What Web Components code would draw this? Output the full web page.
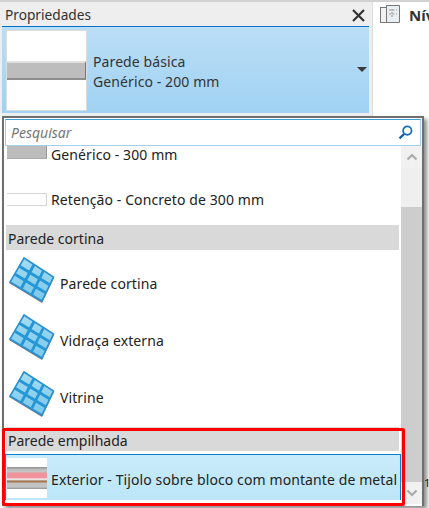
<!DOCTYPE html>
<html><head><meta charset="utf-8">
<style>
html,body{margin:0;padding:0;background:#fff;overflow:hidden}
body{width:429px;height:508px;font-family:"Noto Sans","Open Sans",sans-serif;color:#222}
</style></head><body>
<app-shell></app-shell>
<template id="curtain"><svg width="46" height="46" viewBox="0 0 46 46">
<defs><linearGradient id="cg" x1="0" y1="0" x2="0" y2="1"><stop offset="0" stop-color="#a6dcf2"/><stop offset="1" stop-color="#78c8ec"/></linearGradient></defs>
<polygon points="15,2 45,21 33,46 0,26" fill="#56656e" opacity=".85"/>
<polygon points="15,1 44.5,20 33,44 1,25" fill="url(#cg)" stroke="#2a90d0" stroke-width="1.6"/>
<g stroke="#2596d6" stroke-width="2.8" fill="none"><path d="M25 7.5L12 32M34.5 13.5L22.5 38M10 9L41 28M5.500 17L37 36"/></g>
</svg></template>
<script>
const def=(n,css,html,init)=>customElements.define(n,class extends HTMLElement{
  constructor(){super();this.attachShadow({mode:'open'}).innerHTML='<style>'+css+'</style>'+html;}
  connectedCallback(){init&&init(this)}
});
def('wall-thumb',`:host{display:block;background:#fff;box-sizing:border-box;flex:none;position:relative}
 .w{display:flex;flex-direction:column;justify-content:center;height:100%}
 ::slotted(*){display:block}`,`<div class="w"><slot></slot></div>`);
def('sec-head',`:host{display:flex;align-items:center;background:#d9d9d9;margin-left:1px;padding:2px 0 0 2px;font-size:14px;height:25px;color:#222;width:393px;box-sizing:border-box}`,`<slot></slot>`);
def('type-row',`:host{display:flex;align-items:center;font-size:14px;letter-spacing:.1px;color:#222;white-space:nowrap}
 .tx{padding-top:var(--tx-top,0px)}`,`<slot name="pic"></slot><span class="tx"><slot></slot></span>`);
def('panel-header',`:host{display:flex;align-items:center;justify-content:space-between;height:24px;box-sizing:border-box;padding:0 7px 0 5px;font-size:13.7px;color:#333}
 svg{display:block;margin-top:2px}`,`<slot></slot><svg width="13" height="13" viewBox="0 0 13 13"><path d="M1 1L12 12M12 1L1 12" stroke="#333" stroke-width="2.2"/></svg>`);
def('type-selector',`:host{display:flex;align-items:center;height:87px;margin:0 3px 0 2px;box-sizing:border-box;border-top:1.5px solid #0072c6;background:linear-gradient(#bbdef6,#a0d2f3);padding:3px 2px 3px 4px;font-size:14px;letter-spacing:.1px;line-height:20px;color:#333}
 .t{flex:1;padding-left:6px;padding-top:3px}
 .thumb{width:81px;height:81px;background:#fff;border:1px solid #dcdcdc;box-sizing:border-box;display:flex;align-items:center;flex:none}
 .bar{width:100%;height:19px;background:#bdbdbd;border-top:2px solid #e0e0e0;border-bottom:2px solid #8e8e8e;border-right:1px solid #777;box-sizing:border-box}
 .c{width:0;height:0;border-left:5px solid transparent;border-right:5px solid transparent;border-top:5px solid #3a3a3a;margin-top:-1px}`,
 `<div class="thumb"><div class="bar"></div></div><div class="t"><slot></slot></div><div class="c"></div>`);
def('props-panel',`:host{display:block;width:372px;height:114px;background:#eeeeee;flex:none}`,`<slot></slot>`);
def('side-view',`:host{display:flex;align-items:flex-start;gap:9px;flex:1;padding:3px 0 0 7px;font-weight:700;font-size:15px;color:#333;border-left:1px solid #dcdcdc;overflow:hidden;white-space:nowrap;height:111px}
 svg{flex:none;margin-top:0}`,`<svg width="20" height="18" viewBox="0 0 20 18" fill="none"><rect x=".5" y="2.5" width="13" height="15" fill="#f2f2f2" stroke="#777"/><path d="M6.5 .5H19.5V17.5H6.5V.5Z" fill="#e9eef2" stroke="#777"/><path d="M9 5h8M9 9h8" stroke="#999" stroke-dasharray="2 1.5"/><path d="M12 4v8" stroke="#888" stroke-dasharray="2 1"/></svg><slot></slot>`);
def('search-box',`:host{display:flex;align-items:center;justify-content:space-between;height:27px;margin:1px 1px 0 1px;box-sizing:border-box;border:1px solid #a5cfe8;border-top-color:#3e9dd4;background:#fff;padding:0 7px 0 5px;font-style:italic;font-size:14px;color:#777}
 svg{flex:none}`,`<slot></slot><svg width="15" height="15" viewBox="0 0 15 15" fill="none"><circle cx="9.3" cy="5.6" r="4.2" stroke="#1a70b8" stroke-width="1.8"/><path d="M6 9L1.5 13.5" stroke="#155f9f" stroke-width="2.4"/></svg>`);
def('scroll-bar',`:host{display:flex;flex-direction:column;width:21px;height:358px;background:#efefef;flex:none}
 .b{height:22px;display:flex;align-items:center;justify-content:center;flex:none;background:#f1f1f1}
 .s{height:39px;flex:none}.th{flex:1;background:#cdcdcd}`,
 `<div class="b"><svg width="12" height="8" viewBox="0 0 12 8" fill="none"><path d="M1.5 6.5L6 2L10.5 6.5" stroke="#a8a8a8" stroke-width="2"/></svg></div><div class="s"></div><div class="th"></div><div class="b"><svg width="12" height="8" viewBox="0 0 12 8" fill="none"><path d="M1.5 1.5L6 6L10.5 1.5" stroke="#a8a8a8" stroke-width="2"/></svg></div>`);
def('type-menu',`:host{position:absolute;left:2px;top:116px;width:422px;height:390px;box-sizing:border-box;background:#fff;border-style:solid;border-width:2px 2px 0 2px;border-color:#6f6f6f;box-shadow:3px 3px 4px rgba(0,0,0,.45);display:flex;flex-direction:column}
 .main{display:flex;flex:1;height:358px}
 .list{flex:1;min-width:0;padding-left:1px}`,
 `<slot name="search"></slot><div class="main"><div class="list"><slot></slot></div><slot name="bar"></slot></div>`);
def('red-frame',`:host{position:absolute;left:2px;top:428px;width:403px;height:78px;box-sizing:border-box;border:3.5px solid #f00;border-radius:2px;pointer-events:none}`,``);
def('app-shell',`:host{display:block;position:relative;width:429px;height:508px;overflow:hidden;background:#fff}
 .top{height:2px;background:#d2d2d2}
 .row{display:flex}
 .one{position:absolute;left:424px;top:476px;font-size:11px;color:#222;line-height:14px}
 wall-thumb{width:40px}
 .g1{height:13px;background:#bdbdbd;border-right:1px solid #999;border-bottom:1px solid #aaa;box-sizing:border-box}
 .g2{height:13px;background:#fff;border:1px solid #d4d4d4;border-left:none;box-sizing:border-box}
 type-row span{display:block}
 .pic-a{margin-right:4px}
 .r1{height:13px;margin-top:0;--tx-top:3px}.r2{height:14px;margin-top:33px}
 .rr{margin-left:2px}
 .h1{margin-top:19px}
 .cw{height:57px;margin-top:0;--tx-top:4px}.cw svg{margin:0 5px 0 4px}
 .h2{margin-top:3px;height:24px}
 .sel{margin-top:3px;width:396px;height:46px;box-sizing:border-box;background:linear-gradient(#c8ebfa,#bce6f8);border:1px solid #1080cc;border-bottom:none;padding-left:0;--tx-top:3px}
 .sel wall-thumb{height:40px;margin-right:4px;margin-left:1px;width:40px}
 .stack{width:100%;height:22px;background:linear-gradient(#8f8f8f 0,#c4c4c4 3px,#c4c4c4 5px,#f0939b 6px,#f0939b 11px,#fff 12px,#c9c9c9 13px,#a9754b 14px,#a9754b 15px,#c4c4c4 16px,#c4c4c4 20px,#8f8f8f 22px)}`,
 `<div class="top"></div>
 <div class="row">
  <props-panel>
   <panel-header>Propriedades</panel-header>
   <type-selector>Parede básica<br>Genérico - 200 mm</type-selector>
  </props-panel>
  <side-view>Nív</side-view>
 </div>
 <span class="one">1</span>
 <type-menu>
  <search-box slot="search">Pesquisar</search-box>
  <type-row class="r1 rr"><wall-thumb slot="pic" class="pic-a"><div class="g1"></div></wall-thumb>Genérico - 300 mm</type-row>
  <type-row class="r2 rr"><wall-thumb slot="pic" class="pic-a"><div class="g2"></div></wall-thumb>Retenção - Concreto de 300 mm</type-row>
  <sec-head class="h1">Parede cortina</sec-head>
  <type-row class="cw" style="margin-top:3px"><span slot="pic" data-c></span>Parede cortina</type-row>
  <type-row class="cw"><span slot="pic" data-c></span>Vidraça externa</type-row>
  <type-row class="cw"><span slot="pic" data-c></span>Vitrine</type-row>
  <sec-head class="h2">Parede empilhada</sec-head>
  <type-row class="sel"><wall-thumb slot="pic"><div class="stack"></div></wall-thumb>Exterior - Tijolo sobre bloco com montante de metal</type-row>
  <scroll-bar slot="bar"></scroll-bar>
 </type-menu>
 <red-frame></red-frame>`,
 el=>{const t=document.getElementById('curtain');el.shadowRoot.querySelectorAll('[data-c]').forEach(s=>s.appendChild(t.content.cloneNode(true)));});
</script>
</body></html>
